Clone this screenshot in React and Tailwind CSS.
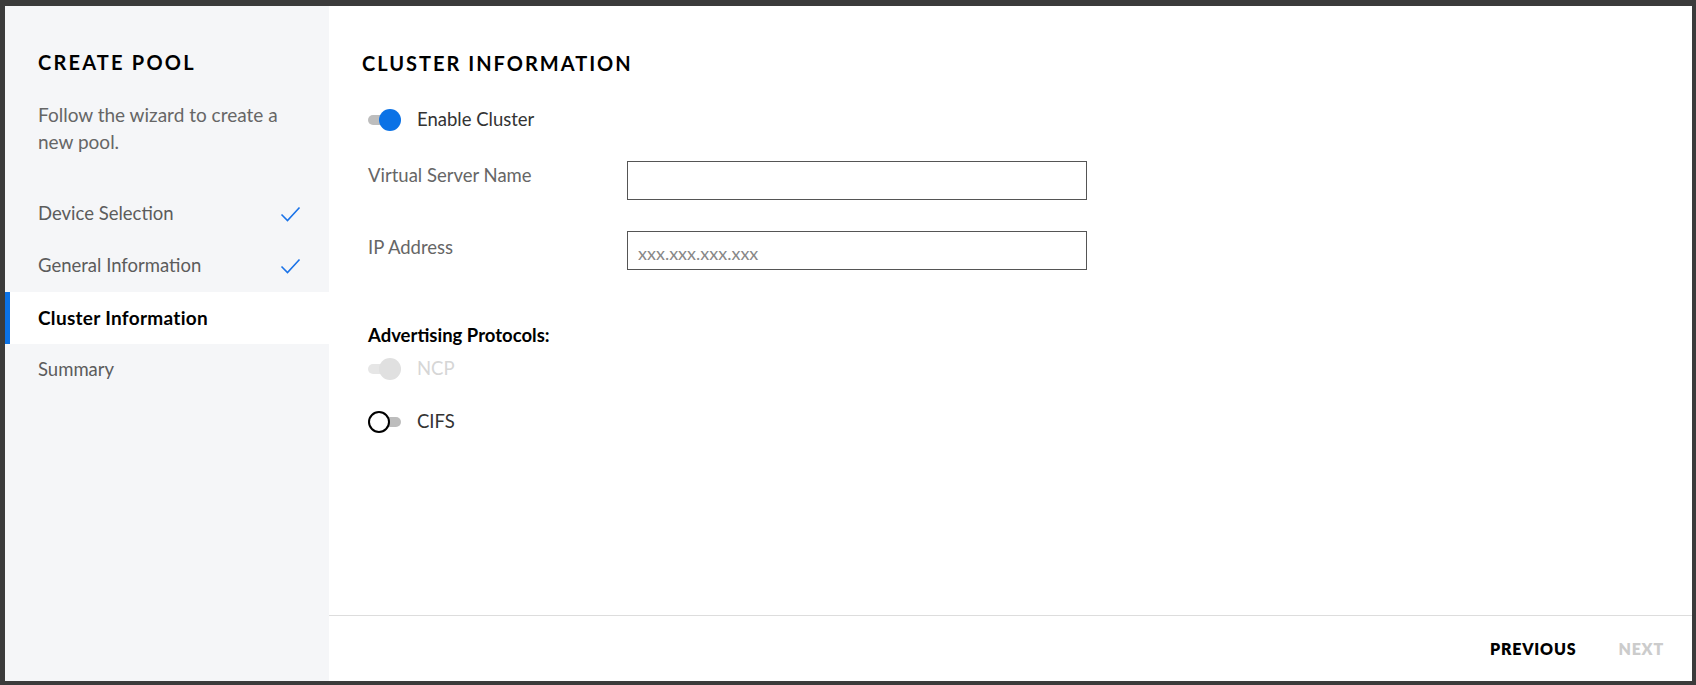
import React from "react";

const font = { fontFamily: "Lato, 'Open Sans', 'Liberation Sans', sans-serif" };

function Check() {
  return (
    <svg width="21" height="16" viewBox="0 0 21 16" fill="none">
      <path d="M1.5 8.5 L7.5 14.5 L19.5 1.5" stroke="#1a73e8" strokeWidth="1.6" />
    </svg>
  );
}

function Toggle({ state }) {
  if (state === "on") {
    return (
      <div className="relative w-[33px] h-[22px] shrink-0">
        <div className="absolute left-0 top-[6px] w-[28px] h-[10px] rounded-full bg-[#bdbdbd]" />
        <div className="absolute right-0 top-0 w-[22px] h-[22px] rounded-full bg-[#0b72e6]" />
      </div>
    );
  }
  if (state === "disabled") {
    return (
      <div className="relative w-[33px] h-[22px] shrink-0">
        <div className="absolute left-0 top-[6px] w-[28px] h-[10px] rounded-full bg-[#e6e6e6]" />
        <div className="absolute right-0 top-0 w-[22px] h-[22px] rounded-full bg-[#e0e0e0]" />
      </div>
    );
  }
  return (
    <div className="relative w-[33px] h-[22px] shrink-0">
      <div className="absolute right-0 top-[6px] w-[28px] h-[10px] rounded-full bg-[#bdbdbd]" />
      <div className="absolute left-0 top-0 w-[22px] h-[22px] rounded-full bg-white border-2 border-black" />
    </div>
  );
}

const steps = [
  { label: "Device Selection", done: true },
  { label: "General Information", done: true },
  { label: "Cluster Information", active: true },
  { label: "Summary" },
];

export default function App() {
  return (
    <div
      className="w-[1696px] h-[685px] bg-[#3b3b3b] pt-[6px] pl-[5px] overflow-hidden"
      style={font}
    >
      <div className="flex w-[1687px] h-[675px] bg-white">
        {/* Sidebar */}
        <div className="w-[324px] shrink-0 bg-[#f5f6f8] pt-[42px]">
          <div className="px-[33px]">
            <h2 className="text-[20px] leading-[28px] font-bold tracking-[2.2px] text-black">
              CREATE POOL
            </h2>
            <p className="mt-[25px] text-[19px] leading-[27px] text-[#666]">
              Follow the wizard to create a new pool.
            </p>
          </div>
          <div className="mt-[33px]">
            {steps.map((s) => (
              <div
                key={s.label}
                className={
                  "flex items-center justify-between h-[52px] pr-[28px] " +
                  (s.active
                    ? "bg-white border-l-[5px] border-[#0b72e6] pl-[28px]"
                    : "pl-[33px]")
                }
              >
                <span
                  className={
                    (s.active
                      ? "text-[19px] font-bold tracking-[0.3px] text-black"
                      : "text-[18.5px] text-[#5c5c5c]")
                  }
                >
                  {s.label}
                </span>
                {s.done && <Check />}
              </div>
            ))}
          </div>
        </div>

        {/* Main */}
        <div className="flex-1 flex flex-col">
          <div className="flex-1 pl-[33px] pt-[43px]">
            <h2 className="text-[20px] leading-[28px] font-bold tracking-[2px] text-black">
              CLUSTER INFORMATION
            </h2>
            <div className="pl-[6px]">
              <div className="flex items-center gap-[16px] mt-[32px] h-[22px]">
                <Toggle state="on" />
                <span className="text-[18.5px] text-[#333]">Enable Cluster</span>
              </div>

              <div className="flex items-start mt-[30px]">
                <span className="w-[259px] text-[18.5px] leading-[24px] pt-[2px] text-[#666]">
                  Virtual Server Name
                </span>
                <input
                  className="w-[460px] h-[39px] border border-[#555] outline-none px-[10px] text-[17px]"
                  style={font}
                />
              </div>

              <div className="flex items-start mt-[31px]">
                <span className="w-[259px] text-[18.5px] leading-[24px] pt-[4px] text-[#666]">
                  IP Address
                </span>
                <input
                  className="w-[460px] h-[39px] border border-[#555] outline-none px-[10px] pt-[4px] text-[18px] placeholder:text-[#888]"
                  placeholder="xxx.xxx.xxx.xxx"
                  style={font}
                />
              </div>

              <div className="mt-[53px] text-[18.5px] leading-[24px] font-bold text-black">
                Advertising Protocols:
              </div>
              <div className="flex items-center gap-[16px] mt-[11px] h-[22px]">
                <Toggle state="disabled" />
                <span className="text-[18.5px] text-[#d6d6d6]">NCP</span>
              </div>
              <div className="flex items-center gap-[16px] mt-[31px] h-[22px]">
                <Toggle state="off" />
                <span className="text-[18.5px] text-[#333]">CIFS</span>
              </div>
            </div>
          </div>

          <div className="h-[66px] shrink-0 border-t border-[#dddddd] flex items-center justify-end pr-[28px] gap-[42px]">
            <span className="text-[16px] font-extrabold tracking-[0.8px] text-black">
              PREVIOUS
            </span>
            <span className="text-[16px] font-extrabold tracking-[0.8px] text-[#cccccc]">
              NEXT
            </span>
          </div>
        </div>
      </div>
    </div>
  );
}
